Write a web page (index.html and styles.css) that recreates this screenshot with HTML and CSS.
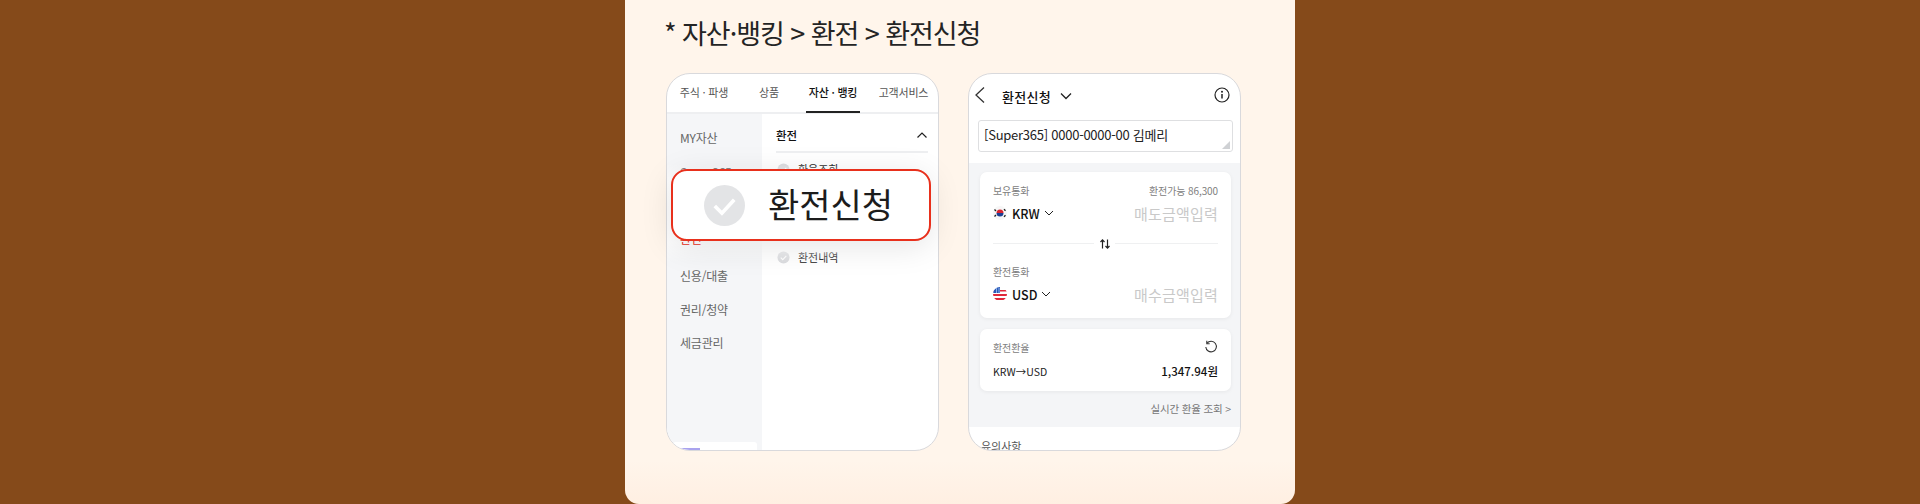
FILE: index.html
```html
<!DOCTYPE html>
<html lang="ko">
<head>
<meta charset="utf-8">
<title>환전신청</title>
<link rel="stylesheet" href="styles.css">
</head>
<body>
<main class="card">
  <h2 class="title">* 자산·뱅킹 &gt; 환전 &gt; 환전신청</h2>
  <div class="phones">
    <section class="phone">
      <nav class="tabs">
        <div class="tab">주식 · 파생</div>
        <div class="tab">상품</div>
        <div class="tab active"><span>자산 · 뱅킹</span></div>
        <div class="tab">고객서비스</div>
      </nav>
      <div class="menu">
        <ul class="side">
          <li>MY자산</li>
          <li>Super365</li>
          <li>연금</li>
          <li class="red">환전</li>
          <li>신용/대출</li>
          <li>권리/청약</li>
          <li>세금관리</li>
          <li class="banner"><i></i></li>
        </ul>
        <div class="panel">
          <div class="panel-head"><b>환전</b>
            <svg width="12" height="8" viewBox="0 0 12 8"><path d="M1.5 6.5 6 2l4.500 4.500" fill="none" stroke="#222" stroke-width="1.200"/></svg>
          </div>
          <div class="item"><svg class="tick" viewBox="0 0 14 14"><circle cx="7" cy="7" r="6.500" fill="#dcdde0"/><path d="M4 7.200 6.200 9.300 10 5.200" fill="none" stroke="#fff" stroke-width="1.300"/></svg>환율조회</div>
          <div class="item"><svg class="tick" viewBox="0 0 14 14"><circle cx="7" cy="7" r="6.500" fill="#dcdde0"/></svg>환전신청</div>
          <div class="item"><svg class="tick" viewBox="0 0 14 14"><circle cx="7" cy="7" r="6.500" fill="#dcdde0"/><path d="M4 7.200 6.200 9.300 10 5.200" fill="none" stroke="#fff" stroke-width="1.300"/></svg>환전내역</div>
        </div>
      </div>
      <div class="veil"></div>
    </section>

    <section class="phone">
      <header class="bar">
        <svg class="back" width="12" height="18" viewBox="0 0 12 18"><path d="M10 1.500 2 9l8 7.500" fill="none" stroke="#333" stroke-width="1.300"/></svg>
        <strong>환전신청</strong>
        <svg class="caret" width="14" height="9" viewBox="0 0 14 9"><path d="M2 1.500 7 6.500l5-5" fill="none" stroke="#222" stroke-width="1.300"/></svg>
        <svg class="info" width="16" height="16" viewBox="0 0 16 16"><circle cx="8" cy="8" r="7" fill="none" stroke="#222" stroke-width="1.200"/><path d="M8 7v4.500" stroke="#222" stroke-width="1.500"/><circle cx="8" cy="4.800" r="1" fill="#222"/></svg>
      </header>
      <div class="account">[Super365] 0000-0000-00 김메리
        <svg class="grip" width="8" height="8" viewBox="0 0 8 8"><path d="M8 0v8H0z" fill="#cfd1d4"/></svg>
      </div>
      <div class="gray">
        <div class="box exchange">
          <div class="row small"><span>보유통화</span><span>환전가능 86,300</span></div>
          <div class="row amount">
            <span class="cur">
              <svg class="flag" viewBox="0 0 14 14"><circle cx="7" cy="7" r="7" fill="#f7f7f7"/><path d="M3.500 7a3.500 3.500 0 0 1 7 0z" fill="#d8232f"/><path d="M3.500 7a3.500 3.500 0 0 0 7 0z" fill="#1c3f94"/><path d="M1.500 3.500 3 5M11 3.200 12.500 4.700M1.500 10.500 3 9M11 10.800 12.500 9.300" stroke="#222" stroke-width="1.300"/></svg>
              KRW
              <svg class="down" width="10" height="6" viewBox="0 0 10 6"><path d="M1 1l4 4 4-4" fill="none" stroke="#222" stroke-width="1"/></svg>
            </span>
            <span class="hint">매도금액입력</span>
          </div>
          <div class="swap"><span class="swap-btn"><svg width="12" height="12" viewBox="0 0 12 12"><path d="M3.500 10.500V2M1.500 4l2-2.200 2 2.200M8.500 1.500V10M6.500 8l2 2.200 2-2.200" fill="none" stroke="#222" stroke-width="1.200"/></svg></span></div>
          <div class="row small second"><span>환전통화</span></div>
          <div class="row amount">
            <span class="cur">
              <svg class="flag" viewBox="0 0 14 14"><defs><clipPath id="c"><circle cx="7" cy="7" r="7"/></clipPath></defs><g clip-path="url(#c)"><rect width="14" height="14" fill="#fff"/><path d="M0 7h14v2H0zM0 11h14v2H0z" fill="#e0283a"/><path d="M0 3h14v1.500H0z" fill="#e0283a"/><rect width="7" height="6" fill="#2a5ab8"/><path d="M3 0h1v6H3zM5.500 1h1v5h-1z" fill="#8fb1ea"/></g></svg>
              USD
              <svg class="down" width="10" height="6" viewBox="0 0 10 6"><path d="M1 1l4 4 4-4" fill="none" stroke="#222" stroke-width="1"/></svg>
            </span>
            <span class="hint">매수금액입력</span>
          </div>
        </div>
        <div class="box rate">
          <div class="row small"><span>환전환율</span>
            <svg width="14" height="14" viewBox="0 0 14 14"><path d="M3 3.200A5.300 5.300 0 1 1 1.800 7" fill="none" stroke="#333" stroke-width="1.100"/><path d="M2.800 .8v2.900h2.900" fill="none" stroke="#333" stroke-width="1.100"/></svg>
          </div>
          <div class="row value"><span>KRW→USD</span><b>1,347.94원</b></div>
        </div>
        <div class="live">실시간 환율 조회 &gt;</div>
      </div>
      <div class="notice">유의사항</div>
    </section>
  </div>
  <div class="popup">
    <svg class="popup-tick" viewBox="0 0 40 40"><circle cx="20" cy="20" r="20" fill="#e3e4e6"/><path d="M10.500 20.500 17.500 27.500 29.500 14.500" fill="none" stroke="#fff" stroke-width="3.600"/></svg>
    <span class="popup-label">환전신청</span>
  </div>
</main>
</body>
</html>
```
FILE: styles.css
```css
* { box-sizing: border-box; }
html, body { margin: 0; padding: 0; }
body {
  height: 504px;
  overflow: hidden;
  background: #854a1a;
  display: flex;
  justify-content: center;
  font-family: "Noto Sans CJK KR", "Noto Sans", sans-serif;
  color: #222;
}
.card {
  position: relative;
  width: 670px;
  height: 504px;
  padding: 13px 40px 0 41px;
  background: linear-gradient(#fff5eb 0, #fff5eb 460px, #ffefe2 504px);
  border-radius: 0 0 14px 14px;
}
.title {
  margin: 0 0 25px -2px;
  height: 35px;
  font-size: 27px;
  line-height: 40px;
  font-weight: 400;
  letter-spacing: -1.050px;
  color: #242424;
}
.phones { display: flex; gap: 29px; }
.phone {
  position: relative;
  width: 273px;
  height: 378px;
  background: #fff;
  border: 1px solid #d9d9dc;
  border-radius: 24px;
  overflow: hidden;
}
.tabs {
  display: grid;
  grid-template-columns: 74px 56px 72px 69px;
  height: 40px;
  border-bottom: 2px solid #eeeff1;
}
.tab {
  font-size: 11px;
  line-height: 36px;
  text-align: center;
  color: #555;
  letter-spacing: -.2px;
  white-space: nowrap;
}
.tab.active { color: #111; font-weight: 500; }
.tab.active span {
  display: inline-block;
  width: 54px;
  height: 39px;
  border-bottom: 2px solid #222;
}
.menu { display: flex; height: 336px; }
.side {
  width: 95px;
  margin: 0;
  padding: 7px 0 0 13px;
  list-style: none;
  background: #f5f6f8;
  position: relative;
}
.side li {
  height: 33.500px;
  font-size: 12px;
  line-height: 33px;
  color: #666;
  letter-spacing: -.2px;
}
.side li.red {
  position: relative;
  z-index: 1;
  color: #e8301c;
  margin-bottom: 4px;
}
.side .banner {
  position: absolute;
  left: 6px;
  right: 5px;
  bottom: 0;
  height: 8px;
  background: #fff;
  border-radius: 3px 3px 0 0;
}
.side .banner i {
  position: absolute;
  left: 7px;
  bottom: 0;
  width: 20px;
  height: 2px;
  background: #a9a3ee;
}
.panel { flex: 1; padding: 10px 10px 0 14px; }
.panel-head {
  display: flex;
  justify-content: space-between;
  align-items: center;
  height: 29px;
  margin-bottom: -6px;
  padding-bottom: 5px;
  border-bottom: 2px solid #eeeff1;
  font-size: 11.500px;
  color: #111;
}
.panel-head b { font-weight: 500; }
.item {
  display: flex;
  align-items: center;
  gap: 8px;
  height: 44px;
  padding-left: 1px;
  font-size: 11px;
  color: #222;
}
.tick { width: 13px; height: 13px; }
.veil {
  position: absolute;
  left: 0;
  right: 0;
  top: 90px;
  height: 98px;
  background: linear-gradient(rgba(255,255,255,0), rgba(255,255,255,.85) 18%, rgba(255,255,255,.8) 80%, rgba(255,255,255,0));
}
.bar {
  position: relative;
  display: flex;
  align-items: center;
  height: 44px;
  margin-bottom: 2px;
  padding-left: 33px;
  font-size: 13px;
  color: #111;
}
.bar strong { font-weight: 500; letter-spacing: .3px; }
.back { position: absolute; left: 5px; top: 12px; }
.caret { margin-left: 8px; }
.info { position: absolute; right: 10px; top: 13px; }
.account {
  position: relative;
  height: 32px;
  margin: 0 7px 0 9px;
  padding-left: 5px;
  border: 1px solid #dedfe1;
  border-radius: 3px;
  font-size: 13px;
  line-height: 28px;
  letter-spacing: -.25px;
  color: #222;
}
.grip { position: absolute; right: 2px; bottom: 2px; }
.gray {
  margin-top: 11px;
  height: 264px;
  padding: 9px 9px 0 11px;
  background: #f4f5f7;
}
.box {
  padding: 10px 13px 0;
  background: #fff;
  border-radius: 7px;
  box-shadow: 0 1px 4px rgba(0,0,0,.06);
}
.exchange { height: 146px; }
.rate { height: 62px; margin-top: 11px; }
.row { display: flex; justify-content: space-between; align-items: center; }
.small { height: 16px; font-size: 10px; color: #808080; letter-spacing: -.1px; }
.second { margin-top: 19px; }
.amount { height: 30px; }
.cur { display: flex; align-items: center; font-size: 12.500px; font-weight: 500; color: #111; }
.flag { width: 14px; height: 14px; margin-right: 5px; }
.down { margin-left: 4px; }
.hint { font-size: 15px; color: #c9c9c9; letter-spacing: .2px; }
.swap { position: relative; height: 1px; margin-top: 15px; background: #eff0f1; }
.swap-btn {
  position: absolute;
  left: 101px;
  top: -10px;
  display: flex;
  align-items: center;
  justify-content: center;
  width: 21px;
  height: 21px;
  border-radius: 50%;
  background: #fff;
}
.value { margin-top: 8px; font-size: 10.500px; color: #222; }
.value b { font-size: 11.500px; font-weight: 500; color: #111; }
.live { margin-top: 10px; text-align: right; font-size: 10.500px; line-height: 16px; color: #777; letter-spacing: -.15px; }
.notice { padding: 11px 0 0 12px; font-size: 11px; line-height: 16px; color: #555; }
.popup {
  position: absolute;
  z-index: 2;
  left: 46px;
  top: 169px;
  display: flex;
  align-items: center;
  width: 260px;
  height: 72px;
  padding-left: 31px;
  gap: 23px;
  background: #fff;
  border: 2px solid #e8301c;
  border-radius: 16px;
  box-shadow: 0 6px 32px rgba(0,0,0,.1);
  font-size: 34px;
  line-height: 1;
  color: #1c1c1c;
}
.popup-label { padding-bottom: 3px; }
.popup-tick { width: 41px; height: 41px; }
```
